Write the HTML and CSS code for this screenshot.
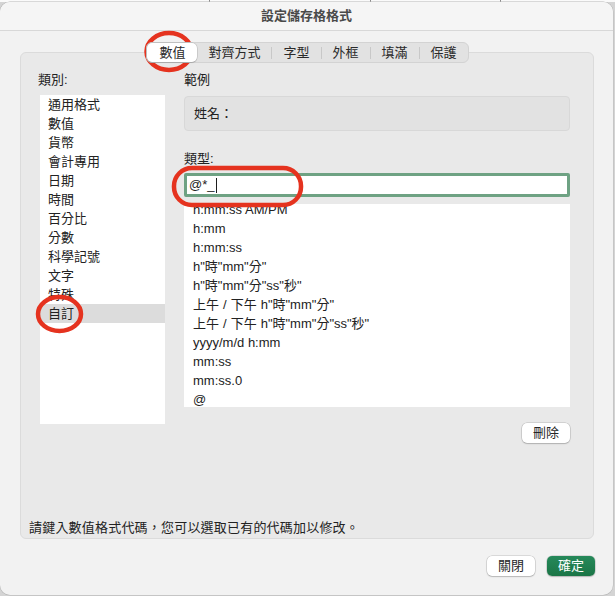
FILE: index.html
```html
<!DOCTYPE html>
<html lang="zh-Hant">
<head>
<meta charset="utf-8">
<title>設定儲存格格式</title>
<link rel="stylesheet" href="styles.css">
</head>
<body>
<div class="desk"></div>
<div class="window">
  <div class="titlebar">設定儲存格格式</div>
  <div class="content">
    <div class="tabs-row">
      <div class="tabs">
        <span class="tab active">數值</span>
        <span class="tab">對齊方式</span>
        <span class="sep"></span>
        <span class="tab">字型</span>
        <span class="sep"></span>
        <span class="tab">外框</span>
        <span class="sep"></span>
        <span class="tab">填滿</span>
        <span class="sep"></span>
        <span class="tab">保護</span>
      </div>
    </div>
    <div class="panel">
      <div class="cols">
        <div class="left">
          <div class="label cat-label">類別:</div>
          <ul class="catlist">
            <li>通用格式</li>
            <li>數值</li>
            <li>貨幣</li>
            <li>會計專用</li>
            <li>日期</li>
            <li>時間</li>
            <li>百分比</li>
            <li>分數</li>
            <li>科學記號</li>
            <li>文字</li>
            <li>特殊</li>
            <li class="selected">自訂</li>
          </ul>
        </div>
        <div class="right">
          <div class="label">範例</div>
          <div class="sample">姓名：</div>
          <div class="label type-label">類型:</div>
          <div class="input">@*_<span class="caret"></span></div>
          <ul class="fmtlist">
            <li>h:mm:ss AM/PM</li>
            <li>h:mm</li>
            <li>h:mm:ss</li>
            <li>h"時"mm"分"</li>
            <li>h"時"mm"分"ss"秒"</li>
            <li>上午<span class="sl">/</span>下午<span class="gap">h</span>"時"mm"分"</li>
            <li>上午<span class="sl">/</span>下午<span class="gap">h</span>"時"mm"分"ss"秒"</li>
            <li>yyyy/m/d h:mm</li>
            <li>mm:ss</li>
            <li>mm:ss.0</li>
            <li>@</li>
          </ul>
          <div class="actions"><button class="btn">刪除</button></div>
        </div>
      </div>
      <p class="hint">請鍵入數值格式代碼，您可以選取已有的代碼加以修改。</p>
    </div>
    <div class="footer">
      <button class="btn">關閉</button>
      <button class="btn primary">確定</button>
    </div>
  </div>
</div>
<svg class="marks" width="615" height="596" viewBox="0 0 615 596" aria-hidden="true">
  <ellipse cx="169" cy="51.5" rx="22.5" ry="18.5" />
  <ellipse cx="59.5" cy="314" rx="21.5" ry="17" />
  <rect x="174" y="168" width="127" height="37" rx="18" ry="18" />
</svg>
</body>
</html>
```

FILE: styles.css
```css
* { box-sizing: border-box; }

html, body {
  margin: 0;
  padding: 0;
}

body {
  width: 615px;
  height: 596px;
  overflow: hidden;
  position: relative;
  background: #d4d4d4;
  font-family: "Liberation Sans", "Noto Sans CJK TC", sans-serif;
  font-size: 13px;
  color: #222222;
}

.desk {
  height: 2px;
  background:
    linear-gradient(90deg, transparent 209px, #8a8a8a 209px, #8a8a8a 210px, transparent 210px,
      transparent 370px, #8a8a8a 370px, #8a8a8a 371px, transparent 371px,
      transparent 500px, #8a8a8a 500px, #8a8a8a 501px, transparent 501px),
    #fafafa;
}

.window {
  width: 613px;
  height: 593px;
  border-radius: 10px;
  background: #f2f2f2;
  box-shadow: 0 0 0 0.5px #b5b5b5;
  display: flex;
  flex-direction: column;
}

.titlebar {
  height: 29px;
  line-height: 28px;
  text-align: center;
  font-size: 13px;
  font-weight: 600;
  color: #4a4a4a;
  background: #f5f5f5;
  border-bottom: 1px solid #d8d8d8;
  border-radius: 10px 10px 0 0;
}

.content {
  flex: 1;
  padding: 11px 19px 0 20px;
  display: flex;
  flex-direction: column;
}

.tabs-row {
  display: flex;
  justify-content: center;
  position: relative;
  z-index: 1;
}

.tabs {
  display: flex;
  align-items: center;
  height: 21px;
  background: #e2e2e2;
  border: 1px solid #d3d3d3;
  border-radius: 6px;
  margin-left: 1px;
}

.tab {
  height: 19px;
  line-height: 19px;
  padding: 0 11px;
  color: #2a2a2a;
  font-size: 13px;
}

.tab.active {
  background: #ffffff;
  border-radius: 5px;
  box-shadow: 0 0 0 0.5px rgba(0, 0, 0, 0.18), 0 1px 1px rgba(0, 0, 0, 0.12);
  padding: 0 12px;
}

.sep {
  width: 1px;
  height: 12px;
  background: #c8c8c8;
}

.panel {
  margin-top: -11px;
  height: 487px;
  background: #e9e9e9;
  border: 1px solid #dbdbdb;
  border-radius: 6px;
  padding: 19px 23px 2px 19px;
  display: flex;
  flex-direction: column;
}

.cols {
  display: flex;
  gap: 19px;
}

.left {
  width: 125px;
  display: flex;
  flex-direction: column;
}

.right {
  flex: 1;
  display: flex;
  flex-direction: column;
}

.label {
  height: 16px;
  line-height: 16px;
  color: #222222;
}

.cat-label {
  margin-left: -2px;
  margin-bottom: 7px;
}

ul {
  list-style: none;
  margin: 0;
  padding: 0;
}

.catlist {
  height: 329px;
  background: #ffffff;
}

.catlist li {
  height: 19px;
  line-height: 19px;
  padding-left: 8px;
  white-space: nowrap;
}

.catlist li.selected {
  background: #dcdcdc;
}

.sample {
  margin-top: 8px;
  height: 35px;
  line-height: 33px;
  padding-left: 9px;
  background: #e2e2e2;
  border: 1px solid #d8d8d8;
  border-radius: 4px;
}

.type-label {
  margin-top: 20px;
}

.input {
  margin-top: 6px;
  height: 24px;
  line-height: 18px;
  padding-left: 2px;
  background: #ffffff;
  border: 3px solid #6ea283;
  border-radius: 2px;
  display: flex;
  align-items: center;
  color: #1e1e1e;
}

.caret {
  display: inline-block;
  width: 1px;
  height: 15px;
  margin-left: 1px;
  background: #1e1e1e;
}

.fmtlist {
  margin-top: 7px;
  height: 203px;
  overflow: hidden;
  background: #ffffff;
  padding: 0 9px;
}

.fmtlist li {
  height: 19px;
  line-height: 19px;
  white-space: nowrap;
}

.fmtlist li:first-child {
  margin-top: -4px;
}

.fmtlist .sl {
  margin: 0 4px;
}

.fmtlist .gap {
  margin-left: 4px;
}

.actions {
  margin-top: 16px;
  display: flex;
  justify-content: flex-end;
}

.btn {
  width: 48px;
  height: 20px;
  padding: 0;
  border: none;
  border-radius: 5px;
  background: #ffffff;
  box-shadow: 0 0 0 0.5px rgba(0, 0, 0, 0.2), 0 1px 1.5px rgba(0, 0, 0, 0.16);
  font-family: "Liberation Sans", "Noto Sans CJK TC", sans-serif;
  font-size: 13px;
  line-height: 20px;
  color: #262626;
}

.btn.primary {
  background: linear-gradient(#26895a, #1b7546);
  color: #ffffff;
}

.hint {
  margin: auto 0 0 -19px;
  padding-left: 8px;
  height: 16px;
  line-height: 16px;
  color: #222222;
  letter-spacing: 0.2px;
}

.footer {
  margin-top: 17px;
  margin-right: -1px;
  display: flex;
  justify-content: flex-end;
  gap: 12px;
}

.marks {
  position: absolute;
  left: 0;
  top: 0;
  pointer-events: none;
}

.marks ellipse,
.marks rect {
  fill: none;
  stroke: #e5331f;
  stroke-width: 4.5;
}
```
